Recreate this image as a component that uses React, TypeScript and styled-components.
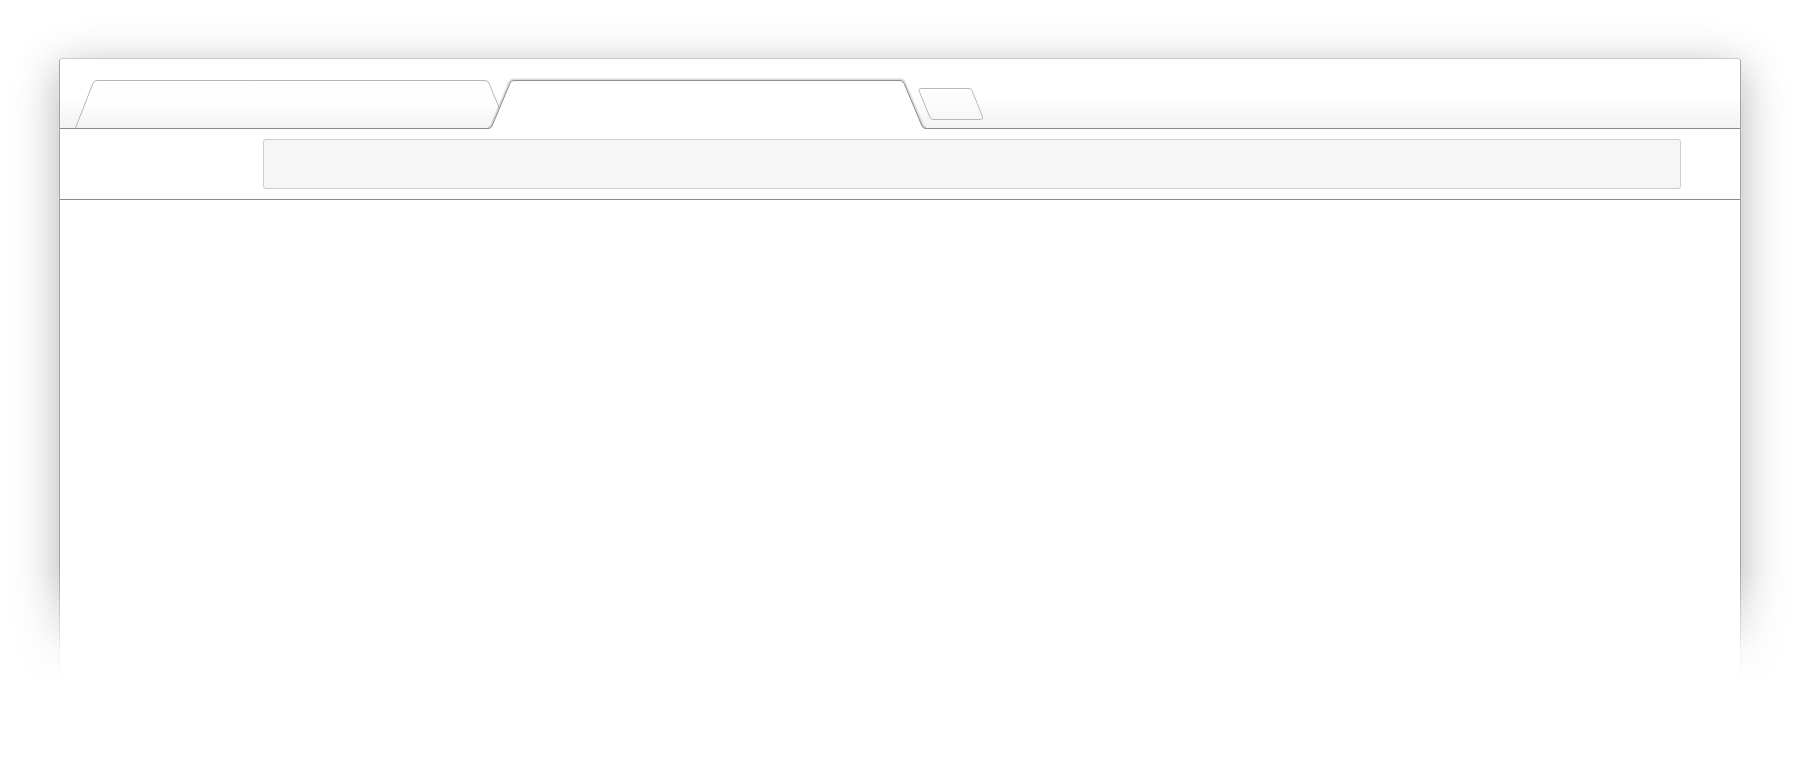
import React from "react";
import styled, { createGlobalStyle } from "styled-components";

const GlobalStyle = createGlobalStyle`
  html, body {
    margin: 0;
    padding: 0;
    background: #ffffff;
    overflow: hidden;
    font-family: "Liberation Sans", Arial, sans-serif;
  }
  * { box-sizing: border-box; }
`;

const Stage = styled.div`
  position: relative;
  width: 1800px;
  height: 762px;
  padding: 58px 59px 0 59px;
  overflow: hidden;
  background: #ffffff;
`;

const BrowserWindow = styled.div`
  height: 760px;
  background: #ffffff;
  border: 1px solid #a4a4a4;
  border-top-color: #c9c9c9;
  border-bottom: none;
  border-radius: 4px 4px 0 0;
  box-shadow: 0 10px 46px rgba(0, 0, 0, 0.3);
  display: flex;
  flex-direction: column;
`;

const TabStrip = styled.div`
  height: 70px;
  display: flex;
  align-items: flex-end;
  padding-left: 14px;
  border-bottom: 1px solid #8a8a8a;
  border-radius: 3px 3px 0 0;
  background: linear-gradient(#ffffff 0%, #ffffff 55%, #f3f3f3 100%);
`;

const InactiveTab = styled.svg`
  display: block;
  flex-shrink: 0;
  width: 436px;
  height: 48px;
`;

const ActiveTab = styled.svg`
  display: block;
  flex-shrink: 0;
  width: 438px;
  height: 49px;
  margin-left: -22px;
  margin-bottom: -1px;
  overflow: visible;
`;

const NewTabButton = styled.svg`
  display: block;
  flex-shrink: 0;
  align-self: flex-start;
  width: 72px;
  height: 36px;
  margin-top: 27px;
  margin-left: -11px;
`;

const Toolbar = styled.div`
  height: 71px;
  display: flex;
  align-items: center;
  padding: 0 59px 0 203px;
  border-bottom: 1px solid #8a8a8a;
  background: #ffffff;
`;

const AddressBar = styled.div`
  flex: 1;
  height: 50px;
  background: #f6f6f6;
  border: 1px solid #cdcdcd;
  border-radius: 3px;
`;

const Content = styled.div`
  flex: 1;
  background: #ffffff;
`;

const BottomFade = styled.div`
  position: absolute;
  left: 0;
  right: 0;
  top: 570px;
  bottom: 0;
  background: linear-gradient(
    rgba(255, 255, 255, 0) 0px,
    rgba(255, 255, 255, 0.85) 80px,
    #ffffff 112px
  );
  pointer-events: none;
`;

const activeOutline =
  "M0 48.5 Q3 48.5 4 46 L21.9 3.4 Q23 0.5 26 0.5 L412 0.5 Q415 0.5 416.1 3.4 L434 46 Q435 48.5 438 48.5";

export default function App() {
  return (
    <>
      <GlobalStyle />
      <Stage>
        <BrowserWindow>
          <TabStrip>
            <InactiveTab viewBox="0 0 436 48">
              <defs>
                <linearGradient id="inactiveFill" x1="0" y1="0" x2="0" y2="1">
                  <stop offset="0" stopColor="#ffffff" />
                  <stop offset="0.5" stopColor="#fdfdfd" />
                  <stop offset="1" stopColor="#f3f3f3" />
                </linearGradient>
              </defs>
              <path
                d="M1.5 48 L18.9 3.4 Q20 0.5 23 0.5 L411 0.5 Q414 0.5 415.1 3.4 L433.5 48 Z"
                fill="url(#inactiveFill)"
                stroke="none"
              />
              <path
                d="M1.5 48 L18.9 3.4 Q20 0.5 23 0.5 L411 0.5 Q414 0.5 415.1 3.4 L433.5 48"
                fill="none"
                stroke="#b7b7b7"
                strokeWidth="1"
              />
            </InactiveTab>
            <ActiveTab viewBox="0 0 438 49">
              <path
                d={activeOutline}
                fill="none"
                stroke="rgba(0,0,0,0.07)"
                strokeWidth="5"
              />
              <path
                d={activeOutline}
                fill="none"
                stroke="rgba(0,0,0,0.08)"
                strokeWidth="3"
              />
              <path
                d={activeOutline + " L438 49 L0 49 Z"}
                fill="#ffffff"
                stroke="none"
              />
              <path
                d={activeOutline}
                fill="none"
                stroke="#8e8e8e"
                strokeWidth="1"
              />
            </ActiveTab>
            <NewTabButton viewBox="0 0 72 36">
              <defs>
                <linearGradient id="newTabFill" x1="0" y1="0" x2="0" y2="1">
                  <stop offset="0" stopColor="#ffffff" />
                  <stop offset="1" stopColor="#f7f7f7" />
                </linearGradient>
              </defs>
              <path
                d="M4.2 5.2 Q3.2 2.5 6 2.5 L54 2.5 Q56 2.5 57 4.5 L67.6 30.8 Q68.6 33.5 65.8 33.5 L18 33.5 Q16 33.5 15 31.5 Z"
                fill="url(#newTabFill)"
                stroke="#b9b9b9"
                strokeWidth="1"
              />
            </NewTabButton>
          </TabStrip>
          <Toolbar>
            <AddressBar />
          </Toolbar>
          <Content />
        </BrowserWindow>
        <BottomFade />
      </Stage>
    </>
  );
}
